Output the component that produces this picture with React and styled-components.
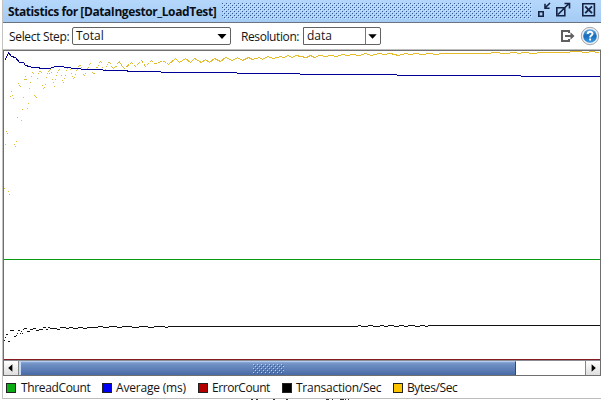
import React from "react";
import styled, { createGlobalStyle } from "styled-components";

const Global = createGlobalStyle`
  body { margin: 0; background: #fff; overflow: hidden; }
  * { box-sizing: border-box; }
`;

const Screen = styled.div`
  width: 601px;
  height: 406px;
  padding-left: 2px;
  background: #fff;
  font: 12px/16px "Open Sans", "Noto Sans", sans-serif;
  color: #141414;
  overflow: hidden;
`;
const Frame = styled.section`
  height: 399px;
  display: flex;
  flex-direction: column;
  border-left: 1px solid #c2c2c2;
  border-bottom: 1px solid #bdbdbd;
`;
const TitleBar = styled.header`
  height: 23px;
  flex: none;
  display: flex;
  align-items: center;
  padding: 0 4px 0 5px;
  background: linear-gradient(#b5d7fb, #a5cbf4);
  border-bottom: 1px solid #6b7380;
`;
const Title = styled.h1`
  width: 214px;
  margin: 0;
  padding-top: 1px;
  flex: none;
  font-size: 12px;
  line-height: 20px;
  font-weight: 700;
  letter-spacing: ${(p) => p.$track}px;
  white-space: nowrap;
  color: #0a0f18;
`;
const DragTexture = styled.svg`
  width: 310px;
  height: 16px;
  flex: none;
  shape-rendering: crispEdges;
`;
const TitleIcons = styled.svg`
  width: 62px;
  height: 18px;
  margin-left: 4px;
  flex: none;
`;
const Toolbar = styled.div`
  height: 27px;
  flex: none;
  display: flex;
  align-items: center;
  padding: 0 0 1px 6px;
  border-bottom: 1px solid #bebebe;
`;
const Label = styled.span`
  width: ${(p) => p.$w}px;
  padding-top: 2px;
  flex: none;
  white-space: nowrap;
  letter-spacing: ${(p) => p.$track}px;
`;
const Combo = styled.div`
  width: ${(p) => p.$w}px;
  height: 18px;
  flex: none;
  display: flex;
  align-items: center;
  justify-content: space-between;
  padding-left: 3px;
  margin-right: ${(p) => p.$gap}px;
  border: 1px solid #626262;
  border-radius: ${(p) => (p.$editable ? "0 2px 2px 0" : "2px")};
  line-height: ${(p) => (p.$editable ? 17 : 15)}px;
`;
const ComboButton = styled.svg`
  width: 15px;
  height: 16px;
  flex: none;
  border-left: ${(p) => (p.$divided ? "1px solid #777" : "none")};
`;
const ToolIcons = styled.svg`
  width: 42px;
  height: 22px;
  margin-left: auto;
  flex: none;
`;
const ChartPane = styled.div`
  height: 326px;
  flex: none;
  border: 1px solid #6f6f6f;
`;
const Plot = styled.svg`
  display: block;
  width: 596px;
  height: 309px;
  shape-rendering: crispEdges;
`;
const ScrollBar = styled.div`
  height: 15px;
  display: flex;
  background: #fff;
  border-top: 1px solid #8c8c95;
`;
const ArrowButton = styled.svg`
  width: 15px;
  height: 14px;
  flex: none;
  background: linear-gradient(#fff, #dedede);
  border-${(p) => p.$side}: 1px solid #888;
`;
const Thumb = styled.div`
  width: 497px;
  display: flex;
  align-items: center;
  justify-content: center;
  background: linear-gradient(#8ea9d5, #7191c5 15%, #496ba6);
  border: solid;
  border-color: #b3cdf0 #2e4777 #3b5686 #c3dbfa;
  border-width: 1px 1px 0 2px;
`;
const Track = styled.div`flex: 1;`;
const Legend = styled.footer`
  flex: 1;
  display: flex;
  align-items: center;
  padding: 1px 0 0 3px;
`;
const LegendItem = styled.div`
  width: ${(p) => p.$w}px;
  flex: none;
  display: flex;
  align-items: center;
  gap: ${(p) => p.$gap}px;
  white-space: nowrap;
  letter-spacing: ${(p) => p.$track}px;
`;
const Swatch = styled.i`
  width: 10px;
  height: 10px;
  flex: none;
  border: 1px solid #222;
  background: ${(p) => p.$color};
`;
const ClippedCaption = styled.svg`
  display: block;
  width: 599px;
  height: 3px;
`;

const bytesStart = [
  [0,137],[1,93],[2,80],[3,82],[4,140],[5,143],[6,45],[7,40],[8,44],[9,47],[10,93],[11,95],[12,90],[13,66],[14,32],[15,34],[16,35],[17,69],[18,58],[19,46],[20,28],[21,25],[21,28],[22,28],[23,57],[24,52],[25,37],[26,31],[27,25],[28,21],[29,22],[30,44],[31,45],[32,46],[33,27],[34,22],[35,20],[36,20],[37,21],[38,34],[39,37],[40,36],[41,33],[42,26],[43,22],[44,20],[45,19],[45,22],[46,18],[47,21],[48,28],[49,31],[50,35],[51,28],[52,24],[53,21],[54,19],[55,18],[57,24],[58,29],[59,31],[60,27],[61,24],[62,19],[63,17],[64,16],[65,16],[66,18],[67,22],[68,25],[69,27],[70,26],[71,23],[72,19],[73,18],[74,15],[75,14],[76,14],[77,16],[78,18],[79,23],[80,24],[81,22],[82,18],[83,17],[84,16],[85,13],[86,12],[88,21],[89,22],[90,22],[91,18],[92,16],[93,16],[94,14],[95,11],[96,10],[97,11],[98,16],[99,19],[100,19],[101,18],[102,15],[103,13],[104,11],[105,11],[106,12],[107,15],[108,16],[109,17],[110,16],[111,15],[112,15],[113,12],[114,11],[115,10],
];

const bytesEarly = [[115,11],[120,17],[127,11],[131,15],[137,9],[141,15],[147,9],[150,12],[155,11],[158,9],[164,13]];
const bytesLate = [
  [164,13],[171,7],[175,11],[181,7],[186,11],[190,7],[197,11],[201,8],[205,11],[210,7],[216,10],[221,6],[228,9],[233,6],[238,9],[244,6],[248,8],[255,6],[258,8],[263,5],[269,7],[276,5],[279,6],[284,4],[287,6],[292,4],[296,5],[302,6],[306,4],[310,6],[315,4],[321,5],[326,4],[332,5],[338,3],[343,4],[348,3],[355,4],[361,2],[367,4],[374,2],[380,3],[386,2],[394,4],[401,2],[406,3],[411,2],[418,3],[426,2],[431,3],[438,2],[485,2],[488,1],[502,2],[510,1],[515,2],[518,1],[530,2],[535,1],[560,1],[571,0],[583,1],[586,0],[595,1],
];
const average = [[0,9],[2,6],[4,1],[7,5],[11,6],[15,11],[19,11],[21,14],[25,15],[28,16],[34,16],[36,17],[45,17],[51,15],[58,15],[61,16],[71,17],[82,18],[97,18],[100,19],[122,19],[124,20],[156,20],[157,21],[232,21],[233,22],[295,22],[296,23],[388,23],[396,24],[512,24],[520,25],[596,25]];
const transaction = [
  [0,289,1],[1,286,1],[2,283,1],[3,283,1],[4,290,2],[6,279,4],[10,285,1],[11,285,1],[12,284,1],[13,282,1],[14,279,2],[16,282,1],[17,280,1],[18,282,1],[19,278,1],[20,277,3],[23,280,3],[26,278,3],[29,277,3],[32,279,3],[35,278,4],[39,276,3],[42,278,2],[44,276,2],[46,277,4],[50,277,3],[53,278,3],[56,276,6],[62,277,3],[65,276,4],[69,277,5],[74,276,5],[79,277,4],[83,276,7],[90,276,4],[94,275,5],[99,276,6],[105,275,8],[113,276,5],[118,275,10],[128,276,7],[135,275,9],[144,276,6],[150,275,11],[161,276,3],[164,275,190],[354,274,3],[357,275,7],[364,274,5],[369,275,7],[376,274,4],[380,275,4],[384,274,6],[390,275,5],[395,274,5],[400,275,4],[404,274,7],[411,275,5],[416,274,5],[421,275,3],[424,274,172],
];

const path = (pts) => pts.map(([x, y]) => `${x + 0.5},${y + 0.5}`).join(" ");
const Arrow = ({ divided }) => (
  <ComboButton $divided={divided} viewBox="0 0 15 16"><path d="M2.5 6h9L7 11z" fill="#000" /></ComboButton>
);

const legend = [
  ["ThreadCount", "#0aac14", 96, -0.35, 5],
  ["Average (ms)", "#0000f5", 96, -0.2, 4],
  ["ErrorCount", "#b40000", 84, -0.45, 4],
  ["Transaction/Sec", "#000", 111, -0.25, 4],
  ["Bytes/Sec", "#fcc300", 80, -0.4, 4],
];

export default function App() {
  return (
    <Screen>
      <Global />
      <Frame>
        <TitleBar>
          <Title $track={-0.42}>Statistics for [DataIngestor_LoadTest]</Title>
          <DragTexture>
            <defs>
              <pattern id="drag" width="4" height="4" patternUnits="userSpaceOnUse">
                <path d="M0 0h1v1H0zM2 2h1v1H2z" fill="#34568a" />
                <path d="M1 1h1v1H1zM3 3h1v1H3z" fill="#d2e8ff" />
              </pattern>
            </defs>
            <rect width="310" height="16" fill="url(#drag)" />
          </DragTexture>
          <TitleIcons viewBox="0 0 62 18" fill="none" stroke="#152344" strokeWidth="1.6">
            <path d="M2.8 9.8h4.4v4.4H2.8z" />
            <path d="M14 1L9.2 5.8M9 1.8v4.4h4.6" />
            <path d="M20.8 5.8h8v8h-8zM22 12.5L33 1.5M28.5 1.5h5v5" />
            <path d="M46.8 1.8h11.6v12H46.8z" />
            <path d="M49.2 4.4l6.8 6.8M56 4.4l-6.8 6.8" strokeWidth="1.9" />
          </TitleIcons>
        </TitleBar>
        <Toolbar>
          <Label $w={63} $track={-0.33}>Select Step:</Label>
          <Combo $w={159} $gap={10}>Total<Arrow /></Combo>
          <Label $w={62} $track={-0.4}>Resolution:</Label>
          <Combo $w={78} $gap={0} $editable>data<Arrow divided /></Combo>
          <ToolIcons viewBox="0 0 42 22">
            <defs>
              <linearGradient id="help" x1="0" y1="0" x2="0" y2="1">
                <stop stopColor="#65a9e5" /><stop offset=".5" stopColor="#176bbb" /><stop offset="1" stopColor="#3d9be5" />
              </linearGradient>
            </defs>
            <path d="M10 8V6H3v10h7v-2M6 11h8" fill="none" stroke="#606060" strokeWidth="2" />
            <path d="M11.5 7.2v7.6l4-3.8z" fill="#606060" />
            <circle cx="31" cy="11" r="8.7" fill="#eceef0" stroke="#a4aab1" />
            <circle cx="31" cy="11" r="6.8" fill="url(#help)" />
            <path d="M28.7 9c0-3 4.8-3 4.8-.3 0 1.8-2.4 1.7-2.4 3.7M31.1 13.5v2" fill="none" stroke="#fff" strokeWidth="1.9" />
          </ToolIcons>
        </Toolbar>
        <ChartPane>
          <Plot viewBox="0 0 596 309">
            <rect y="208" width="596" height="1" fill="#0a9b14" />
            <polyline points={path(bytesEarly)} fill="none" stroke="#e0b92c" strokeDasharray="4 1" />
            <polyline points={path(bytesLate)} fill="none" stroke="#e6bd28" />
            {bytesStart.map(([x, y]) => <rect key={`${x}-${y}`} x={x} y={y} width="1" height="1" fill="#dfbd36" />)}
            <polyline points={path(average)} fill="none" stroke="#000096" />
            {transaction.map(([x, y, w]) => <rect key={x} x={x} y={y} width={w} height="1" fill="#111" />)}
            <rect y="308" width="596" height="1" fill="#861a22" />
          </Plot>
          <ScrollBar>
            <ArrowButton $side="right" viewBox="0 0 15 14"><path d="M9 3v8L4.5 7z" fill="#000" /></ArrowButton>
            <Thumb>
              <svg width="31" height="10">
                <defs>
                  <pattern id="grip" width="4" height="4" patternUnits="userSpaceOnUse">
                    <path d="M0 0h1v1H0zM2 2h1v1H2z" fill="#b8d1f5" />
                    <path d="M1 1h1v1H1zM3 3h1v1H3z" fill="#385b95" />
                  </pattern>
                </defs>
                <rect width="31" height="10" fill="url(#grip)" />
              </svg>
            </Thumb>
            <Track />
            <ArrowButton $side="left" viewBox="0 0 15 14"><path d="M6 3v8l4.5-4z" fill="#000" /></ArrowButton>
          </ScrollBar>
        </ChartPane>
        <Legend>
          {legend.map(([name, color, width, track, gap]) => (
            <LegendItem key={name} $w={width} $track={track} $gap={gap}><Swatch $color={color} />{name}</LegendItem>
          ))}
        </Legend>
      </Frame>
      <ClippedCaption viewBox="0 0 599 3">
        <path d="M249 .5h2m3 0h2m15 0h2m11 0h2m38 0h3m3 0h1m7 0h4m1 0h1m2 0h1" fill="none" stroke="#333" shapeRendering="crispEdges" />
      </ClippedCaption>
    </Screen>
  );
}
